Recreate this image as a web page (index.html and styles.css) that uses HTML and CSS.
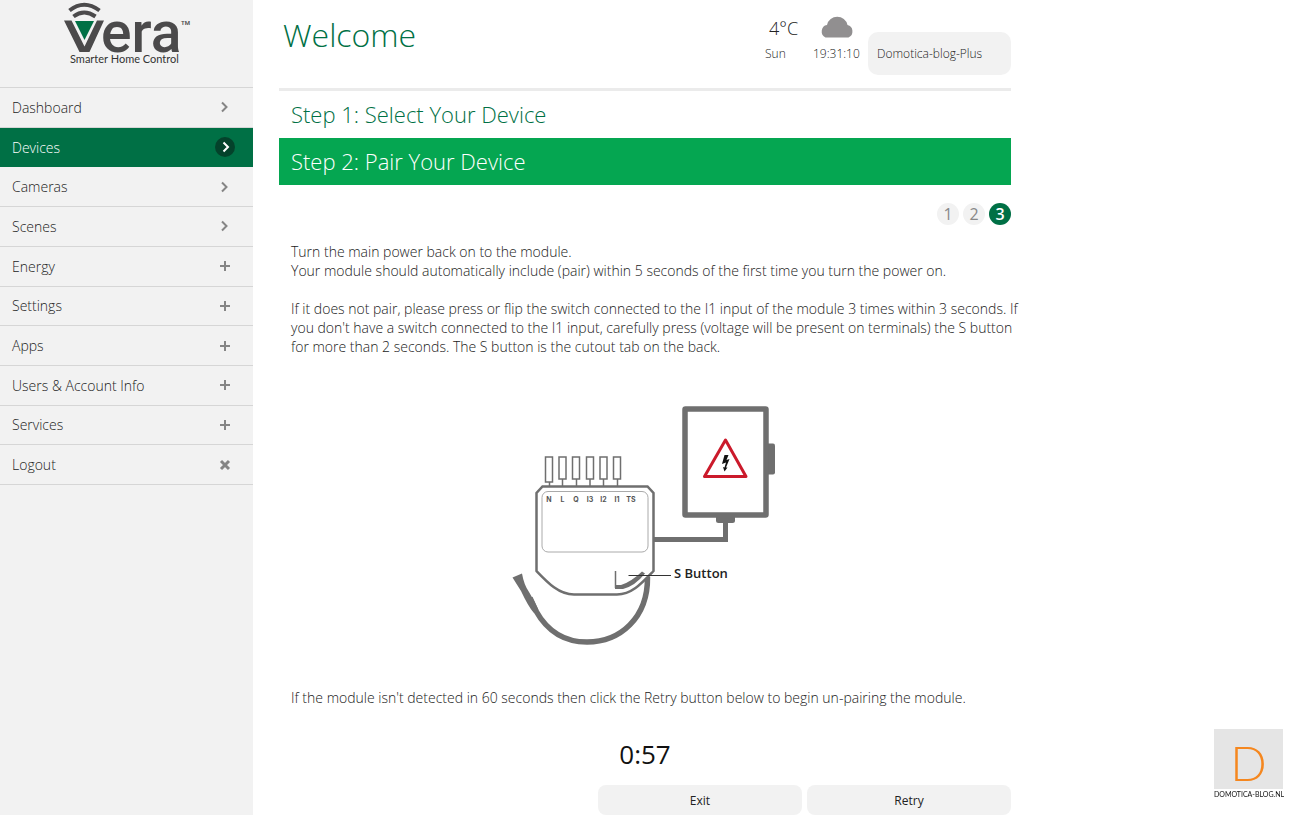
FILE: index.html
```html
<!DOCTYPE html>
<html lang="en">
  <head>
    <meta charset="UTF-8">
    <meta name="viewport" content="width=device-width, initial-scale=1.0"/>
    <title>Vera - Pair Your Device</title>
    <link rel="stylesheet" href="styles.css">
  </head>
  <body>
    <aside class="sidebar">
      <div class="logo">
        <svg width="136" height="68" viewBox="60 0 136 68" role="img" aria-label="Vera Smarter Home Control">
          <path class="logo-arc" d="M69.500 10.500Q84 -1 99.500 10.500"/>
          <path class="logo-arc" d="M73.500 16.500Q84 8.500 95.500 16.500"/>
          <path class="logo-dark" d="M64 20.500H71.500L84.500 46.500L97 20.500H104L89.500 52H79.500Z"/>
          <path class="logo-green" d="M75 21H94L84.500 40Z"/>
          <text class="logo-name" x="101" y="52">era</text>
          <text class="logo-tm" x="181" y="25">TM</text>
          <text class="logo-tagline" x="70" y="63">Smarter Home Control</text>
        </svg>
      </div>

      <nav class="menu">
        <a href="#">Dashboard <svg class="icon" viewBox="0 0 20 20"><path d="M7 5.500L11.500 10L7 14.500"/></svg></a>
        <a href="#" class="active">Devices <svg class="icon" viewBox="0 0 20 20"><circle cx="10" cy="10" r="10"/><path d="M8.500 5.500L13 10L8.500 14.500"/></svg></a>
        <a href="#">Cameras <svg class="icon" viewBox="0 0 20 20"><path d="M7 5.500L11.500 10L7 14.500"/></svg></a>
        <a href="#">Scenes <svg class="icon" viewBox="0 0 20 20"><path d="M7 5.500L11.500 10L7 14.500"/></svg></a>
        <a href="#">Energy <svg class="icon" viewBox="0 0 20 20"><path d="M5 10H15M10 5V15"/></svg></a>
        <a href="#">Settings <svg class="icon" viewBox="0 0 20 20"><path d="M5 10H15M10 5V15"/></svg></a>
        <a href="#">Apps <svg class="icon" viewBox="0 0 20 20"><path d="M5 10H15M10 5V15"/></svg></a>
        <a href="#">Users &amp; Account Info <svg class="icon" viewBox="0 0 20 20"><path d="M5 10H15M10 5V15"/></svg></a>
        <a href="#">Services <svg class="icon" viewBox="0 0 20 20"><path d="M5 10H15M10 5V15"/></svg></a>
        <a href="#">Logout <svg class="icon" viewBox="0 0 20 20"><path class="close" d="M6 6L14 14M14 6L6 14"/></svg></a>
      </nav>
    </aside>

    <main class="content">
      <header class="header">
        <h1>Welcome</h1>
        <div class="weather">
          <span class="temperature">4°C</span>
          <svg class="cloud" width="36" height="24" viewBox="0 0 36 24">
            <path d="M6.500 23.500A6 6.500 0 0 1 8 11A10.500 10.500 0 0 1 28.500 11A6 6.500 0 0 1 29.500 23.500Z"/>
          </svg>
          <span>Sun</span>
          <span>19:31:10</span>
        </div>
        <div class="controller">Domotica-blog-Plus</div>
      </header>

      <h2 class="step">Step 1: Select Your Device</h2>
      <h2 class="step current">Step 2: Pair Your Device</h2>

      <div class="wizard">
        <div class="pages">
          <span>1</span>
          <span>2</span>
          <span class="current-page">3</span>
        </div>

        <p>Turn the main power back on to the module.<br>
        Your module should automatically include (pair) within 5 seconds of the first time you turn the power on.</p>
        <p>If it does not pair, please press or flip the switch connected to the I1 input of the module 3 times within 3 seconds. If you don't have a switch connected to the I1 input, carefully press (voltage will be present on terminals) the S button for more than 2 seconds. The S button is the cutout tab on the back.</p>

        <svg class="diagram" width="290" height="250" viewBox="500 400 290 250">
          <!-- power box -->
          <rect x="763" y="443.500" width="12" height="31" rx="2" fill="#6f6f6f"/>
          <rect x="685" y="409" width="81" height="106" rx="0.500" fill="#fff" stroke="#6f6f6f" stroke-width="5.500" stroke-linejoin="round"/>
          <path d="M716 516H735V520.500Q735 523 732.500 523H718.500Q716 523 716 520.500Z" fill="#6f6f6f"/>
          <path d="M725.500 522V539.500H654" fill="none" stroke="#6f6f6f" stroke-width="5"/>
          <path d="M725.500 440L746 476.500H704.500Z" fill="#fff" stroke="#cb1a2b" stroke-width="3" stroke-linejoin="round"/>
          <path d="M724.500 455L728.500 455L726.500 460L729.500 459L726 467.500L727.500 467.500L724.500 471.500L723 467L724.500 467.500L726 462.500L722 464Z" fill="#111"/>

          <!-- antenna -->
          <path d="M647.500 577C648 618 620 642 587 642C561 642 545 627 536 611L530 598" fill="none" stroke="#6f6f6f" stroke-width="5.500"/>
          <path d="M512.500 577.500L522 573.500Q524 585 529 592Q534 600 538.500 610L533.500 612.500Q528 606 521 591Z" fill="#6f6f6f"/>

          <!-- module -->
          <g fill="#fff" stroke="#6f6f6f" stroke-width="1.500">
            <path d="M549.500 481V486M562.500 479V486M576.500 479V486M590 479V486M603.500 479V486M617.500 479V486"/>
            <rect x="545.500" y="457" width="7" height="25"/>
            <rect x="559" y="457" width="7" height="22"/>
            <rect x="572.500" y="457" width="7" height="22"/>
            <rect x="586.500" y="457" width="7" height="22"/>
            <rect x="600" y="457" width="7" height="22"/>
            <rect x="613.500" y="457" width="7" height="22"/>
          </g>
          <path d="M542.500 486.500H647.500L653.500 493V571C642 583 632 594.500 617 594.500H574C559 594.500 548 583 536.500 571V493Z" fill="#fff" stroke="#6f6f6f" stroke-width="2.500"/>
          <rect x="542" y="491.500" width="106" height="60.500" rx="6" fill="none" stroke="#aaa"/>
          <g class="terminals">
            <text x="549" y="502">N</text>
            <text x="562.500" y="502">L</text>
            <text x="576" y="502">Q</text>
            <text x="590" y="502">I3</text>
            <text x="603.500" y="502">I2</text>
            <text x="617" y="502">I1</text>
            <text x="631" y="502">TS</text>
          </g>
          <path d="M615.500 571V588" stroke="#6f6f6f" stroke-width="1.500"/>
          <path d="M615 585H621Q631 582 642 571.500L645 573.500Q635 586 623 589H615Z" fill="#6f6f6f"/>
          <path d="M628.500 575.500H671" stroke="#333"/>
          <text class="callout" x="674" y="578">S Button</text>
        </svg>

        <p>If the module isn't detected in 60 seconds then click the Retry button below to begin un-pairing the module.</p>
      </div>

      <div class="timer">0:57</div>

      <div class="buttons">
        <button type="button">Exit</button>
        <button type="button">Retry</button>
      </div>
    </main>

    <div class="watermark">
      <div class="watermark-letter">D</div>
      <div class="watermark-name">DOMOTICA-BLOG.NL</div>
    </div>
  </body>
</html>
```
FILE: styles.css
```css
* {
  box-sizing: border-box;
}

body {
  display: flex;
  min-height: 100vh;
  margin: 0;
  font-family: "Open Sans", "Liberation Sans", sans-serif;
  font-size: 14px;
  font-weight: 300;
  line-height: 19px;
  color: #222;
  background: #fff;
}

h1,
h2,
p {
  margin: 0;
  font-weight: 300;
}

/* sidebar */

.sidebar {
  flex: 0 0 253px;
  background: #f2f2f2;
}

.logo {
  height: 87px;
  padding-left: 60px;
}

.logo svg {
  display: block;
}

.logo-arc {
  fill: none;
  stroke: #4b4a4b;
  stroke-width: 4;
}

.logo-dark {
  fill: #4b4a4b;
}

.logo-green {
  fill: #007045;
}

.logo-name {
  font: 500 57px Roboto, sans-serif;
  fill: #4b4a4b;
}

.logo-tm {
  font: 600 6px Roboto, sans-serif;
  fill: #4b4a4b;
}

.logo-tagline {
  font: 400 11px Lato, sans-serif;
  fill: #333;
}

.menu {
  display: grid;
  grid-auto-rows: 1fr;
  height: 398px;
  border-top: 1px solid #d6d6d6;
}

.menu a {
  display: flex;
  align-items: center;
  justify-content: space-between;
  padding: 0 18px 0 12px;
  border-bottom: 1px solid #d6d6d6;
  color: #222;
  text-decoration: none;
}

.menu .active {
  background: #007045;
  border-color: #007045;
  color: #fff;
}

.icon {
  width: 20px;
  height: 20px;
  fill: none;
  stroke: #858585;
  stroke-width: 2;
}

.icon .close {
  stroke-width: 3;
}

.active .icon {
  stroke: #fff;
}

.active circle {
  fill: #04422b;
  stroke: none;
}

/* content */

.content {
  flex: 0 1 732px;
  display: flex;
  flex-direction: column;
  margin-left: 26px;
}

.header {
  display: flex;
  height: 91px;
  padding-left: 4px;
  border-bottom: 3px solid #ebebeb;
}

.header h1 {
  flex: 1;
  padding-top: 12px;
  font-size: 32px;
  line-height: 46px;
  color: #007045;
}

.weather {
  display: grid;
  grid-template-columns: 48px 48px;
  grid-template-rows: 30px 19px;
  row-gap: 2px;
  padding-top: 12px;
  font-size: 12px;
}

.temperature {
  padding-left: 4px;
  font-size: 18px;
  line-height: 32px;
}

.cloud {
  margin: 2px 0 0 6px;
  fill: #918f90;
}

.controller {
  width: 143px;
  height: 43px;
  margin: 32px 0 0 7px;
  padding: 0 9px;
  border-radius: 10px;
  font-size: 12px;
  line-height: 43px;
  background: #f2f2f2;
}

.step {
  padding-left: 12px;
  font-size: 22px;
  line-height: 47px;
  color: #007045;
}

.step.current {
  background: #05a651;
  color: #fff;
}

.wizard {
  flex: 1;
  padding-left: 12px;
}

.wizard p {
  margin: 0 -14px 19px 0;
}

.pages {
  display: flex;
  justify-content: flex-end;
  gap: 4px;
  padding: 18px 0 17px;
}

.pages span {
  width: 22px;
  height: 22px;
  border-radius: 50%;
  font-size: 16px;
  font-weight: 400;
  line-height: 22px;
  text-align: center;
  color: #888;
  background: #f2f2f2;
}

.pages .current-page {
  font-weight: 600;
  color: #fff;
  background: #007045;
}

.diagram {
  display: block;
  margin: 44px auto 38px 209px;
}

.terminals {
  font: 700 7px Inter, sans-serif;
  text-anchor: middle;
  fill: #555;
}

.callout {
  font-size: 13px;
  font-weight: 600;
  fill: #222;
}

.timer {
  margin-bottom: 12px;
  font-size: 26px;
  font-weight: 400;
  line-height: 38px;
  text-align: center;
  color: #111;
}

.buttons {
  display: flex;
  justify-content: flex-end;
  gap: 5px;
}

.buttons button {
  width: 204px;
  height: 30px;
  padding: 0;
  border: 0;
  border-radius: 8px;
  font: 400 12px "Open Sans", "Liberation Sans", sans-serif;
  color: #222;
  background: #f2f2f2;
}

/* watermark in the corner */

.watermark {
  position: fixed;
  right: 17px;
  bottom: 15px;
  width: 69px;
  text-align: center;
}

.watermark-letter {
  height: 60px;
  font: 300 48px/68px Lato, sans-serif;
  color: #f5871f;
  background: #e5e5e5;
}

.watermark-name {
  font: 400 7px/11px Lato, sans-serif;
  color: #111;
  white-space: nowrap;
}
```
